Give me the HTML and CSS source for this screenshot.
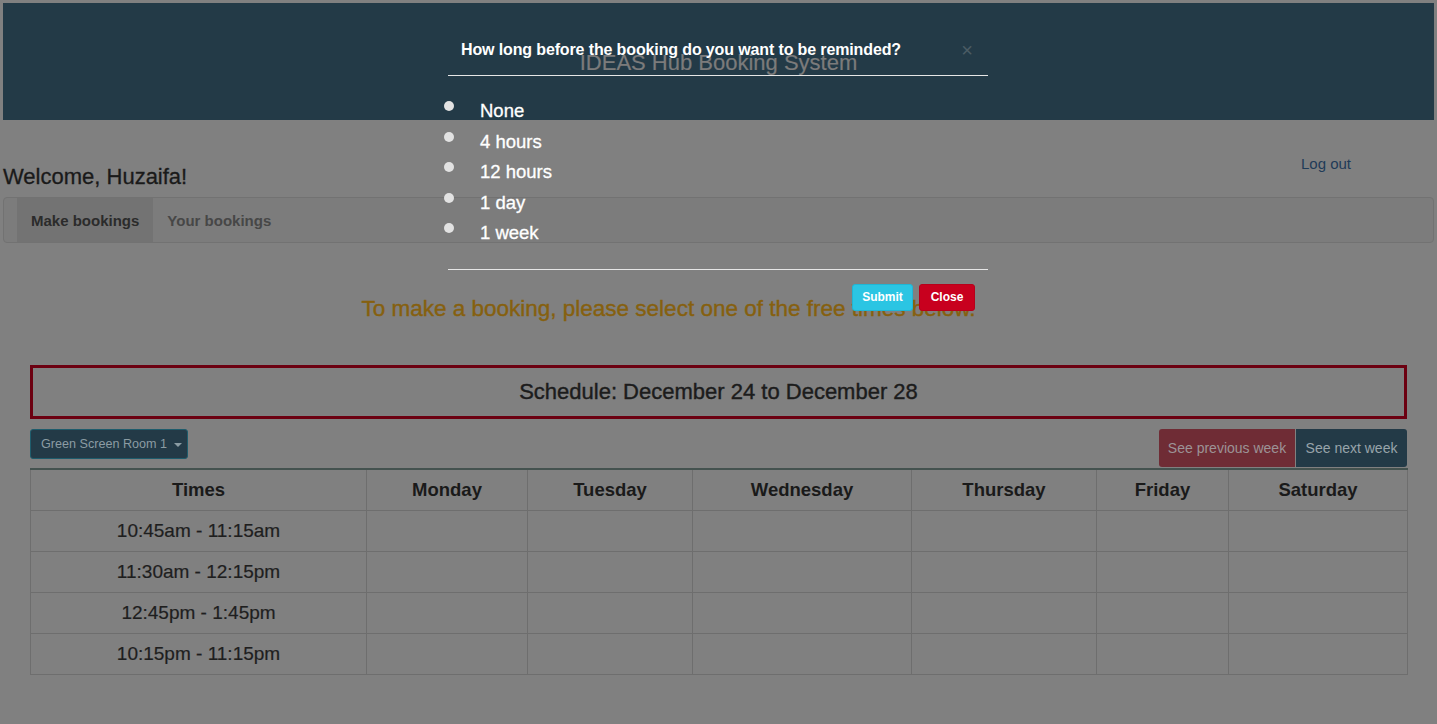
FILE: index.html
```html
<!DOCTYPE html>
<html>
<head>
<meta charset="utf-8">
<link rel="stylesheet" href="styles.css">
</head>
<body>
<header class="site-header"><h1 class="site-title">IDEAS Hub Booking System</h1></header>
<div class="top-row">
  <div class="welcome">Welcome, Huzaifa!</div>
  <a class="logout">Log out</a>
</div>
<nav class="tabs">
  <span class="tab active">Make bookings</span>
  <span class="tab">Your bookings</span>
</nav>
<p class="notice">To make a booking, please select one of the free times below.</p>
<div class="schedule">Schedule: December 24 to December 28</div>
<div class="controls">
  <button class="room-btn">Green Screen Room 1 <span class="caret"></span></button>
  <div class="week-btns">
    <button class="prev-btn">See previous week</button>
    <button class="next-btn">See next week</button>
  </div>
</div>
<table class="sched-table">
  <colgroup>
    <col class="c1"><col class="c2"><col class="c3"><col class="c4"><col class="c5"><col class="c6"><col class="c7">
  </colgroup>
  <thead>
    <tr><th>Times</th><th>Monday</th><th>Tuesday</th><th>Wednesday</th><th>Thursday</th><th>Friday</th><th>Saturday</th></tr>
  </thead>
  <tbody>
    <tr><td>10:45am - 11:15am</td><td></td><td></td><td></td><td></td><td></td><td></td></tr>
    <tr><td>11:30am - 12:15pm</td><td></td><td></td><td></td><td></td><td></td><td></td></tr>
    <tr><td>12:45pm - 1:45pm</td><td></td><td></td><td></td><td></td><td></td><td></td></tr>
    <tr><td>10:15pm - 11:15pm</td><td></td><td></td><td></td><td></td><td></td><td></td></tr>
  </tbody>
</table>

<div class="modal">
  <div class="modal-header">
    <span class="modal-title">How long before the booking do you want to be reminded?</span>
    <span class="modal-x">×</span>
  </div>
  <ul class="options">
    <li><span class="dot"></span>None</li>
    <li><span class="dot"></span>4 hours</li>
    <li><span class="dot"></span>12 hours</li>
    <li><span class="dot"></span>1 day</li>
    <li><span class="dot"></span>1 week</li>
  </ul>
  <div class="modal-footer">
    <button class="submit-btn">Submit</button>
    <button class="close-btn">Close</button>
  </div>
</div>
</body>
</html>
```

FILE: styles.css
```css
html, body {
  margin: 0;
  padding: 0;
}
body {
  background: #808080;
  font-family: "Liberation Sans", Arial, sans-serif;
  color: #1c1c1c;
  width: 1437px;
  height: 724px;
  overflow: hidden;
  position: relative;
}
.site-header {
  margin: 3px 3px 0;
  height: 117px;
  background: #233a47;
  display: flex;
  align-items: center;
  justify-content: center;
}
.site-title {
  margin: 2px 0 0;
  font-size: 22px;
  font-weight: normal;
  color: #7b7b7b;
  -webkit-text-stroke: 0.2px #7b7b7b;
}
.top-row {
  height: 77px;
  margin: 0 3px;
  display: flex;
  justify-content: space-between;
}
.welcome {
  align-self: flex-end;
  font-size: 22px;
  line-height: 24px;
  margin-bottom: 8px;
  color: #1a1a1a;
  -webkit-text-stroke: 0.3px #1a1a1a;
}
.logout {
  margin-top: 34px;
  margin-right: 83px;
  font-size: 15px;
  line-height: 20px;
  color: #1f3b58;
}
.tabs {
  margin: 0 3px;
  height: 44px;
  border: 1px solid #727272;
  border-radius: 4px;
  background: #7c7c7c;
  padding-left: 13px;
  display: flex;
}
.tab {
  display: flex;
  align-items: center;
  padding: 0 14px 0 14px;
  font-size: 15px;
  font-weight: bold;
  color: #474747;
}
.tab.active {
  background: #737373;
  color: #2b2b2b;
}
.notice {
  margin: 53px 0 0;
  padding-right: 100px;
  text-align: center;
  font-size: 22.5px;
  line-height: 26px;
  color: #86600f;
  -webkit-text-stroke: 0.4px #86600f;
}
.schedule {
  margin: 43px 30px 0;
  height: 48px;
  border: 3px solid #6c0011;
  display: flex;
  align-items: center;
  justify-content: center;
  font-size: 22px;
  color: #1c1c1c;
  -webkit-text-stroke: 0.4px #1c1c1c;
}
.controls {
  margin: 10px 30px 0;
  display: flex;
  justify-content: space-between;
  align-items: flex-start;
}
button {
  font-family: "Liberation Sans", Arial, sans-serif;
  cursor: pointer;
  white-space: nowrap;
}
.room-btn {
  height: 30px;
  width: 158px;
  padding: 0 0 0 10px;
  text-align: left;
  background: #233a47;
  border: 1px solid #1e5c6c;
  border-radius: 3px;
  color: #8b9ca3;
  font-size: 12.6px;
}
.caret {
  display: inline-block;
  width: 0;
  height: 0;
  margin-left: 3px;
  vertical-align: middle;
  border-top: 4px solid #8b9ca3;
  border-left: 4px solid transparent;
  border-right: 4px solid transparent;
}
.week-btns {
  display: flex;
}
.prev-btn, .next-btn {
  height: 38px;
  border: none;
  font-size: 14px;
  padding: 0;
  text-align: center;
}
.prev-btn {
  width: 136px;
  background: #6f2c35;
  color: #9c9396;
  border-radius: 3px 0 0 3px;
}
.next-btn {
  width: 111px;
  background: #233a47;
  color: #98a4aa;
  border-radius: 0 3px 3px 0;
  margin-left: 1px;
}
.sched-table {
  margin: 1px 30px 0;
  width: 1377px;
  border-collapse: collapse;
  table-layout: fixed;
}
.c1 { width: 336px; }
.c2 { width: 161px; }
.c3 { width: 165px; }
.c4 { width: 219px; }
.c5 { width: 185px; }
.c6 { width: 132px; }
.c7 { width: 179px; }
.sched-table th, .sched-table td {
  border: 1px solid #6e6e6e;
  text-align: center;
  padding: 0;
}
.sched-table th {
  height: 40px;
  font-size: 18.5px;
  font-weight: bold;
  color: #1a1a1a;
  border-top: 2px solid #44524f;
}
.sched-table td {
  height: 40px;
  font-size: 19px;
  color: #1e1e1e;
  -webkit-text-stroke: 0.2px #1e1e1e;
}

/* modal (drawn over the page) */
.modal {
  position: absolute;
  left: 448px;
  top: 30px;
  width: 540px;
  color: #fff;
}
.modal-header {
  border-bottom: 1px solid #e6e6e6;
  padding: 10px 13px 0;
  box-sizing: border-box;
  height: 46px;
  display: flex;
  justify-content: space-between;
  align-items: flex-start;
}
.modal-title {
  font-size: 16px;
  line-height: 20px;
  font-weight: bold;
  letter-spacing: -0.13px;
}
.modal-x {
  font-size: 20px;
  line-height: 20px;
  color: #4b5c64;
  margin-right: 2px;
}
.options {
  list-style: none;
  margin: 0;
  padding: 20px 0 20px;
}
.options li {
  display: flex;
  align-items: flex-start;
  font-size: 18.5px;
  line-height: 30.5px;
  color: #fff;
  -webkit-text-stroke: 0.3px #fff;
}
.dot {
  width: 10px;
  height: 10px;
  border-radius: 50%;
  background: #e2e2e2;
  margin: 5px 26px 0 -4px;
  flex-shrink: 0;
}
.modal-footer {
  border-top: 1px solid #e6e6e6;
  padding: 14px 13px 0;
  display: flex;
  justify-content: flex-end;
  gap: 6px;
}
.submit-btn, .close-btn {
  height: 27px;
  border-radius: 3px;
  color: #fff;
  font-size: 12px;
  font-weight: bold;
  padding: 0;
}
.submit-btn {
  width: 61px;
  background: #2bc5e3;
  border: 1px solid #20b5d4;
}
.close-btn {
  width: 56px;
  background: #c8001e;
  border: 1px solid #b8001a;
}
```
